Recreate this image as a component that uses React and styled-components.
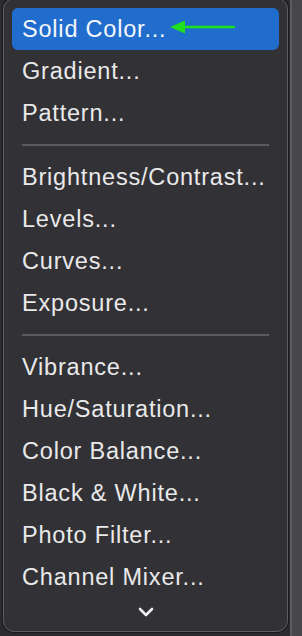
import styled, { createGlobalStyle } from 'styled-components'

const GlobalStyle = createGlobalStyle`
  html, body {
    margin: 0;
    padding: 0;
    background: #2b2b2d;
    overflow: hidden;
  }
  body {
    font-family: "Liberation Sans", Arial, sans-serif;
  }
`

const groups = [
    ['Solid Color...', 'Gradient...', 'Pattern...'],
    ['Brightness/Contrast...', 'Levels...', 'Curves...', 'Exposure...'],
    ['Vibrance...', 'Hue/Saturation...', 'Color Balance...', 'Black & White...', 'Photo Filter...', 'Channel Mixer...'],
]

function App() {
    return (
        <>
            <GlobalStyle />
            <Stage>
                <Menu>
                    {groups.map((items, gi) => (
                        <Group key={gi}>
                            {gi > 0 && <Separator />}
                            {items.map((label) => (
                                <Item key={label} $active={label === 'Solid Color...'}>
                                    {label}
                                    {label === 'Solid Color...' && (
                                        <Arrow viewBox="0 0 70 16" width="70" height="16">
                                            <path d="M16 8 H66" stroke="#1ee01e" strokeWidth="2.4" strokeLinecap="round" />
                                            <path d="M2 8 L17 1.5 L17 14.5 Z" fill="#1ee01e" />
                                        </Arrow>
                                    )}
                                </Item>
                            ))}
                        </Group>
                    ))}
                    <More>
                        <svg viewBox="0 0 16 10" width="16" height="10">
                            <path d="M2 2 L8 8 L14 2" fill="none" stroke="#f0f0f0" strokeWidth="2.6" strokeLinecap="round" strokeLinejoin="round" />
                        </svg>
                    </More>
                </Menu>
                <SideStrip />
            </Stage>
        </>
    )
}

const Stage = styled.div`
    display: flex;
    align-items: flex-start;
    height: 636px;
    padding-left: 3px;
    box-sizing: border-box;
`

const Menu = styled.div`
    width: 287px;
    box-sizing: border-box;
    margin-top: -2px;
    padding: 9px 8px 5px 8px;
    background: #323136;
    border: 1px solid #5f5e62;
    border-radius: 11px;
    box-shadow: 0 0 0 1px #1a1a1b;
    display: flex;
    flex-direction: column;
`

const Group = styled.div`
    display: flex;
    flex-direction: column;
`

const Item = styled.div`
    height: 42px;
    display: flex;
    align-items: center;
    gap: 2px;
    padding-left: 10px;
    border-radius: 6px;
    font-size: 23.5px;
    letter-spacing: 0.8px;
    color: ${({ $active }) => ($active ? '#f4f6fa' : '#e9e9ea')};
    background: ${({ $active }) => ($active ? '#216dcd' : 'transparent')};
`

const Arrow = styled.svg`
    display: block;
    margin-top: -4px;
`

const Separator = styled.div`
    height: 22px;
    display: flex;
    align-items: center;
    padding: 0 10px;
    &::before {
        content: '';
        flex: 1;
        height: 2px;
        background: #5b5a5e;
    }
`

const More = styled.div`
    height: 28px;
    display: flex;
    align-items: center;
    justify-content: center;
`

const SideStrip = styled.div`
    margin-left: 2px;
    width: 2px;
    height: 100%;
    background: #5c5c5e;
    border-right: 10px solid #474749;
`

export default App
